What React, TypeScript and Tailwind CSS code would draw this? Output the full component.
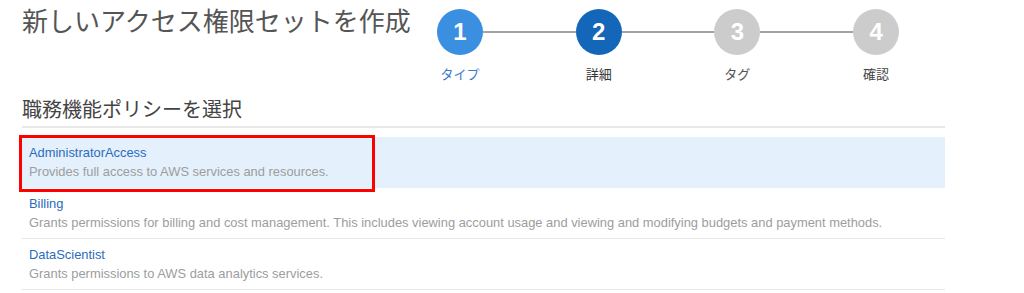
const jp = { fontFamily: '"Noto Sans CJK JP", "Liberation Sans", sans-serif' };

const steps = [
    { n: 1, label: 'タイプ', circle: 'bg-[#3b8fe0]', text: 'text-[#3a7bc8]' },
    { n: 2, label: '詳細', circle: 'bg-[#1466b8]', text: 'text-[#333333]' },
    { n: 3, label: 'タグ', circle: 'bg-[#cccccc]', text: 'text-[#555555]' },
    { n: 4, label: '確認', circle: 'bg-[#cccccc]', text: 'text-[#444444]' },
];

const policies = [
    { name: 'AdministratorAccess', desc: 'Provides full access to AWS services and resources.', selected: true },
    { name: 'Billing', desc: 'Grants permissions for billing and cost management. This includes viewing account usage and viewing and modifying budgets and payment methods.' },
    { name: 'DataScientist', desc: 'Grants permissions to AWS data analytics services.' },
];

function Stepper() {
    return (
        <div className="flex items-start pt-[9px]">
            {steps.map((s, i) => (
                <div key={s.n} className="flex items-start">
                    {i > 0 && <div className="w-[92.7px] h-[2px] bg-[#a3a3a3] mt-[22px]"></div>}
                    <div className="flex flex-col items-center w-[46px]">
                        <div className={`w-[46px] h-[46px] rounded-full flex items-center justify-center text-white text-[24px] font-bold ${s.circle}`}
                            style={{ fontFamily: '"Liberation Sans", Arial, sans-serif' }}>
                            {s.n}
                        </div>
                        <div className={`mt-[10px] text-[13px] leading-[18px] whitespace-nowrap ${s.text}`} style={jp}>
                            {s.label}
                        </div>
                    </div>
                </div>
            ))}
        </div>
    );
}

export default function App() {
    return (
        <div className="w-[1024px] h-[293px] bg-white overflow-hidden">
            <div className="pl-[22px] w-[945px]">
                {/* ヘッダー */}
                <div className="flex h-[95px]">
                    <h1 className="w-[415px] text-[26px] leading-[40px] text-[#555555] whitespace-nowrap" style={jp}>
                        新しいアクセス権限セットを作成
                    </h1>
                    <Stepper />
                </div>

                {/* 職務機能ポリシー */}
                <h2 className="text-[20px] leading-[28px] text-[#444444] pb-[3px] border-b-2 border-[#e8e8e8]" style={jp}>
                    職務機能ポリシーを選択
                </h2>

                <div className="mt-[9px]" style={{ fontFamily: '"Liberation Sans", Arial, sans-serif' }}>
                    {policies.map((p) => (
                        <div
                            key={p.name}
                            className={`relative h-[51px] pt-[6px] px-[7px] text-[12.9px] leading-[19px] border-b ${p.selected ? 'bg-[#e4f0fc] border-[#e4f0fc]' : 'border-[#e6e6e6]'}`}
                        >
                            <div className="text-[#2a6cbc]">{p.name}</div>
                            <div className="text-[#9d9d9d] whitespace-nowrap">{p.desc}</div>
                            {p.selected && (
                                <div className="absolute left-[-3px] top-[-2px] w-[356px] h-[57px] border-[3px] border-[#ff0000]"></div>
                            )}
                        </div>
                    ))}
                </div>
            </div>
        </div>
    );
}
